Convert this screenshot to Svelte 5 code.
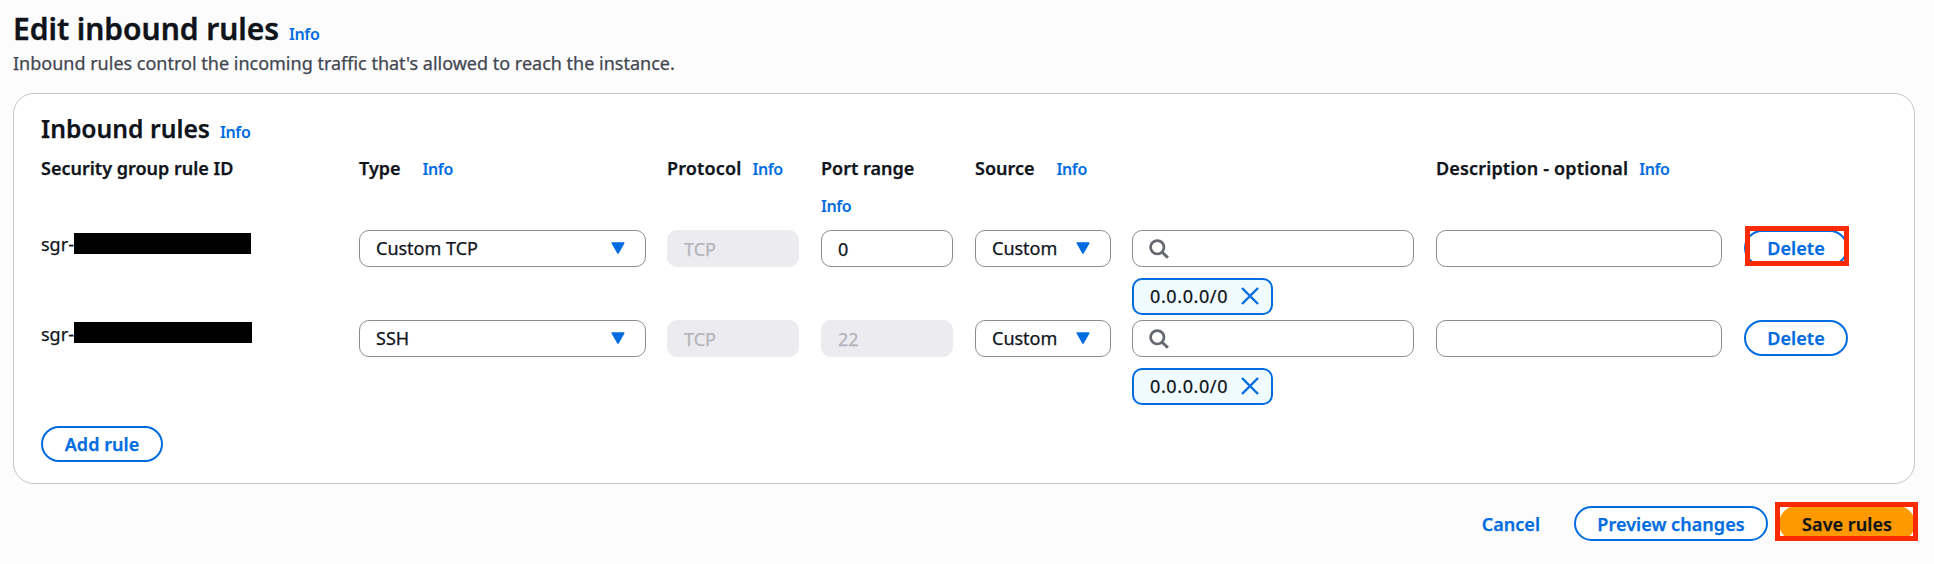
<script>
  const rules = [
    { type: 'Custom TCP', port: '0', portLocked: false, marked: true, mask: [177, 21, 1] },
    { type: 'SSH', port: '22', portLocked: true, marked: false, mask: [178, 21, 0] }
  ];
</script>

{#snippet caret()}
  <svg class="caret" viewBox="0 0 14 12" width="14" height="12"><path d="M1.3 1h11.4L7 11z" fill="#006ce0" stroke="#006ce0" stroke-width="1.6" stroke-linejoin="round" /></svg>
{/snippet}

<main>
  <h1>Edit inbound rules<a class="info">Info</a></h1>
  <p class="lead">Inbound rules control the incoming traffic that's allowed to reach the instance.</p>

  <section class="card">
    <h2>Inbound rules<a class="info">Info</a></h2>

    <div class="grid head">
      <div class="first">Security group rule ID</div>
      <div>Type<a class="info wide">Info</a></div>
      <div class="spaced">Protocol<a class="info near">Info</a></div>
      <div class="stack"><span>Port range</span><a class="info">Info</a></div>
      <div>Source<a class="info wide">Info</a></div>
      <div></div>
      <div class="spaced">Description - optional<a class="info near">Info</a></div>
      <div></div>
    </div>

    {#each rules as rule}
      <div class="grid row">
        <div class="id">sgr-<span class="mask" style="width:{rule.mask[0]}px;height:{rule.mask[1]}px;margin-top:{rule.mask[2]}px"></span></div>
        <div class="control type"><span>{rule.type}</span>{@render caret()}</div>
        <div class="control locked">TCP</div>
        <div class="control field" class:locked={rule.portLocked}>{rule.port}</div>
        <div class="control choice"><span>Custom</span>{@render caret()}</div>
        <div class="source">
          <div class="control">
            <svg class="search" viewBox="0 0 20 20" width="20" height="20" fill="none" stroke="#656871"><circle cx="8.3" cy="8.3" r="6.7" stroke-width="2.7" /><path d="M13.2 13.2l5.7 5.6" stroke-width="3" /></svg>
          </div>
          <div class="token">
            <span>0.0.0.0/0</span>
            <svg viewBox="0 0 18 18" width="18" height="18" fill="none" stroke="#006ce0" stroke-width="2.4"><path d="M1 1l16 16M17 1L1 17" /></svg>
          </div>
        </div>
        <div class="control"></div>
        <div class="action"><button>Delete</button>{#if rule.marked}<i class="mark"></i>{/if}</div>
      </div>
    {/each}

    <button class="add">Add rule</button>
  </section>

  <footer>
    <a class="cancel">Cancel</a>
    <button class="preview">Preview changes</button>
    <div class="save"><button class="primary">Save rules</button><i class="mark"></i></div>
  </footer>
</main>

<style>
  :global(body) { background: #fcfcfd; }
  main {
    box-sizing: border-box;
    width: 1934px;
    height: 564px;
    padding: 11px 19px 0 13px;
    font: 400 18px/24px "Noto Sans", sans-serif;
    -webkit-text-stroke: 0.25px currentColor;
    color: #0f141a;
    overflow: hidden;
  }
  h1, h2, p { margin: 0; white-space: nowrap; }
  h1 { height: 36px; font-size: 30px; font-weight: 600; line-height: 36px; letter-spacing: -0.04px; -webkit-text-stroke-width: 0.4px; }
  .info { font-size: 16px; font-weight: 600; line-height: 1; letter-spacing: -0.4px; color: #006ce0; margin-left: 10px; -webkit-text-stroke: 0; }
  .lead { margin-top: 4px; color: #424650; }
  .card {
    box-sizing: border-box;
    height: 391px;
    margin-top: 18px;
    padding: 20px 27px 0;
    background: #fff;
    border: 1px solid #c6c6cd;
    border-radius: 21px;
  }
  h2 { height: 30px; font-size: 24.7px; font-weight: 600; line-height: 30px; }
  .grid {
    display: grid;
    grid-template-columns: 296px 286px 132px 132px 135px 282px 286px 104px;
    column-gap: 22px;
    align-items: start;
    white-space: nowrap;
  }
  .head { height: 74px; margin-top: 12px; font-weight: 600; }
  .spaced { letter-spacing: 0.15px; }
  .info.wide { margin-left: 22px; }
  .info.near { margin-left: 11px; }
  .stack { display: flex; flex-direction: column; gap: 18px; }
  .stack .info { margin-left: 0; }
  .row { height: 90px; }
  .id { display: flex; padding-top: 2px; }
  .mask { background: #000; }
  .control {
    box-sizing: border-box;
    height: 37px;
    display: flex;
    align-items: center;
    justify-content: space-between;
    padding: 0 20px 1px 16px;
    background: #fff;
    border: 1px solid #8c8c94;
    border-radius: 10px;
  }
  .type, .choice { margin-right: -1px; }
  .field { padding-top: 1px; }
  .locked { background: #ebebf0; border-color: #ebebf0; color: #b4b4bb; padding-top: 1px; }
  .search { margin-top: 1px; }
  .token {
    box-sizing: border-box;
    width: 141px;
    height: 37px;
    margin-top: 11px;
    padding: 0 12px 1px 16px;
    display: flex;
    align-items: center;
    justify-content: space-between;
    border: 2px solid #006ce0;
    border-radius: 10px;
    background: #f0fbff;
    letter-spacing: 0.6px;
  }
  .token svg { margin-top: -1px; }
  button {
    box-sizing: border-box;
    height: 36px;
    padding: 0;
    border: 2px solid #006ce0;
    border-radius: 18px;
    background: #fff;
    color: #006ce0;
    font: 600 18px/24px "Noto Sans", sans-serif;
    letter-spacing: 0.05px;
  }
  .action, .save { position: relative; }
  .action button { width: 104px; }
  .mark { position: absolute; box-sizing: border-box; border: 5px solid #fa2a05; }
  .action .mark { left: 1px; top: -4px; width: 104px; height: 40px; }
  .add { display: block; width: 122px; margin-top: 16px; }
  footer { display: flex; justify-content: flex-end; align-items: center; margin-top: 22px; height: 35px; }
  .cancel { color: #006ce0; font-weight: 600; margin-right: 34px; }
  footer button { height: 35px; }
  .preview { width: 194px; margin-right: 11px; }
  .save { height: 35px; background: #fff; }
  .primary { width: 136px; background: #ff9900; border-color: #ff9900; color: #0f141a; }
  .save .mark { left: -4px; top: -4px; width: 143px; height: 39px; }
</style>
